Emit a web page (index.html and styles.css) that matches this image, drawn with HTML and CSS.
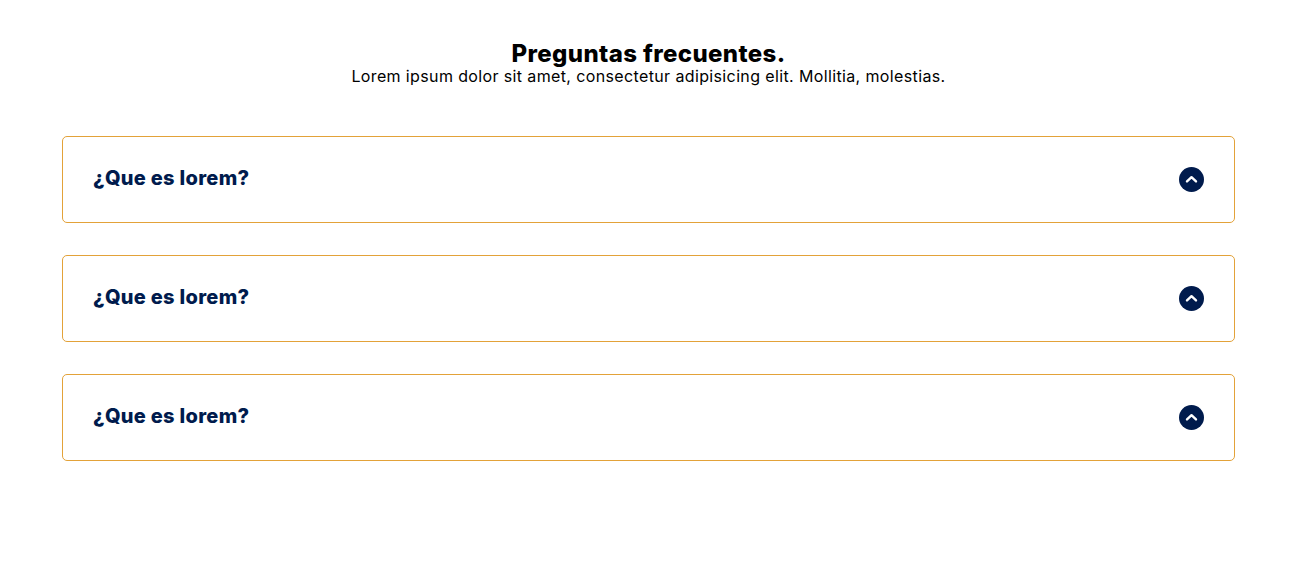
FILE: index.html
```html
<!DOCTYPE html>
<html lang="es">

<head>
    <meta charset="UTF-8">
    <meta name="viewport" content="width=device-width, initial-scale=1.0">
    <title>Preguntas frecuentes</title>
    <link rel="stylesheet" href="styles.css">
</head>

<body>
    <section class="faq">
        <header class="faq-header">
            <h1>Preguntas frecuentes.</h1>
            <p>Lorem ipsum dolor sit amet, consectetur adipisicing elit. Mollitia, molestias.</p>
        </header>

        <div class="faq-list">
            <div class="faq-item">
                <h2>¿Que es lorem?</h2>
                <span class="faq-icon">
                    <svg width="25" height="25" viewBox="0 0 25 25"><path d="M8 14.4l4.5-4.2 4.5 4.2" /></svg>
                </span>
            </div>
            <div class="faq-item">
                <h2>¿Que es lorem?</h2>
                <span class="faq-icon">
                    <svg width="25" height="25" viewBox="0 0 25 25"><path d="M8 14.4l4.5-4.2 4.5 4.2" /></svg>
                </span>
            </div>
            <div class="faq-item">
                <h2>¿Que es lorem?</h2>
                <span class="faq-icon">
                    <svg width="25" height="25" viewBox="0 0 25 25"><path d="M8 14.4l4.5-4.2 4.5 4.2" /></svg>
                </span>
            </div>
        </div>
    </section>
</body>

</html>
```

FILE: styles.css
```css
* {
    box-sizing: border-box;
}

body {
    margin: 0;
    background-color: #fff;
    font-family: Inter, "Open Sans", sans-serif;
}

.faq {
    padding: 40px 64px 0 62px;
}

.faq-header {
    text-align: center;
    margin-bottom: 50px;
}

.faq-header h1 {
    margin: 0;
    font-size: 24px;
    line-height: 27px;
    font-weight: 800;
    letter-spacing: 0.38px;
    color: #000;
}

.faq-header p {
    margin: 0;
    font-size: 16px;
    line-height: 19px;
    letter-spacing: 0.37px;
    color: #000;
}

.faq-list {
    display: flex;
    flex-direction: column;
    gap: 32px;
}

.faq-item {
    display: flex;
    justify-content: space-between;
    align-items: center;
    height: 87px;
    padding: 0 30px;
    border: 1px solid #e3a239;
    border-radius: 5px;
}

.faq-item h2 {
    margin: 0 0 3px;
    font-size: 20px;
    font-weight: 800;
    letter-spacing: 0.3px;
    color: #001b4d;
}

.faq-icon {
    display: flex;
    width: 25px;
    height: 25px;
    border-radius: 50%;
    background-color: #001b4d;
}

.faq-icon path {
    fill: none;
    stroke: #fff;
    stroke-width: 2.4;
    stroke-linecap: round;
    stroke-linejoin: round;
}
```
